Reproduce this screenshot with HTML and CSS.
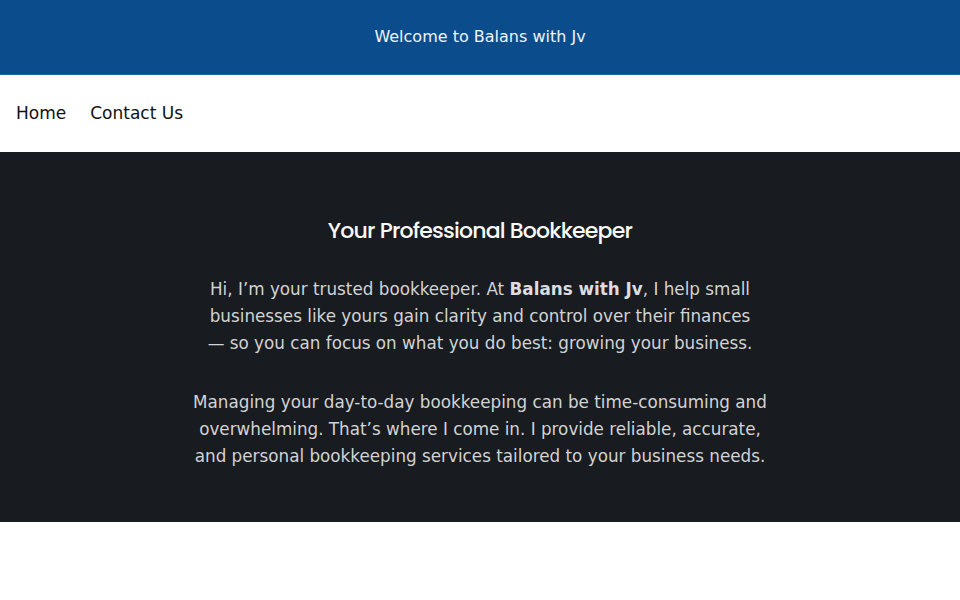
FILE: index.html
```html
<!DOCTYPE html>
<html lang="en">
<head>
<meta charset="utf-8">
<title>Balans with Jv</title>
<link rel="stylesheet" href="styles.css">
</head>
<body>
<header class="top">
  <p class="welcome">Welcome to Balans with Jv</p>
</header>
<nav class="nav">
  <a class="nav-link" href="#">Home</a>
  <a class="nav-link" href="#">Contact Us</a>
</nav>
<section class="hero">
  <div class="hero-inner">
    <h1 class="hero-title">Your Professional Bookkeeper</h1>
    <p class="hero-text">Hi, I’m your trusted bookkeeper. At <strong>Balans with Jv</strong>, I help small businesses like yours gain clarity and control over their finances —&nbsp;so you can focus on what you do best: growing your business.</p>
    <p class="hero-text">Managing your day-to-day bookkeeping can be time-consuming and overwhelming. That’s where I come in. I provide reliable, accurate, and personal bookkeeping services tailored to your business needs.</p>
  </div>
</section>
</body>
</html>
```

FILE: styles.css
```css
* { box-sizing: border-box; }
html, body { margin: 0; padding: 0; }
body {
  font-family: "DejaVu Sans", sans-serif;
  background: #ffffff;
  color: #111;
}
.top {
  height: 75px;
  background: #0b4c8c;
  border-bottom: 1px solid #1a6a9a;
  display: flex;
  align-items: center;
  justify-content: center;
}
.welcome {
  margin: 0 0 2px;
  color: #eef3fa;
  font-size: 16px;
}
.nav {
  height: 77px;
  display: flex;
  align-items: center;
  gap: 24px;
  padding: 0 16px 2px;
  background: #fff;
}
.nav-link {
  color: #111;
  text-decoration: none;
  font-size: 17px;
}
.hero {
  background: #181b1f;
  padding: 62px 0 50px;
  height: 370px;
}
.hero-inner {
  max-width: 580px;
  margin: 0 auto;
  text-align: center;
}
.hero-title {
  margin: 0 0 29px;
  font-family: Poppins, Lato, sans-serif;
  font-weight: 500;
  font-size: 22px;
  color: #fafafa;
  letter-spacing: -0.8px;
}
.hero-text {
  margin: 0 0 32px;
  font-size: 16.8px;
  line-height: 27px;
  color: #d2d3d5;
}
.hero-text strong { color: #dcdde0; }
```
